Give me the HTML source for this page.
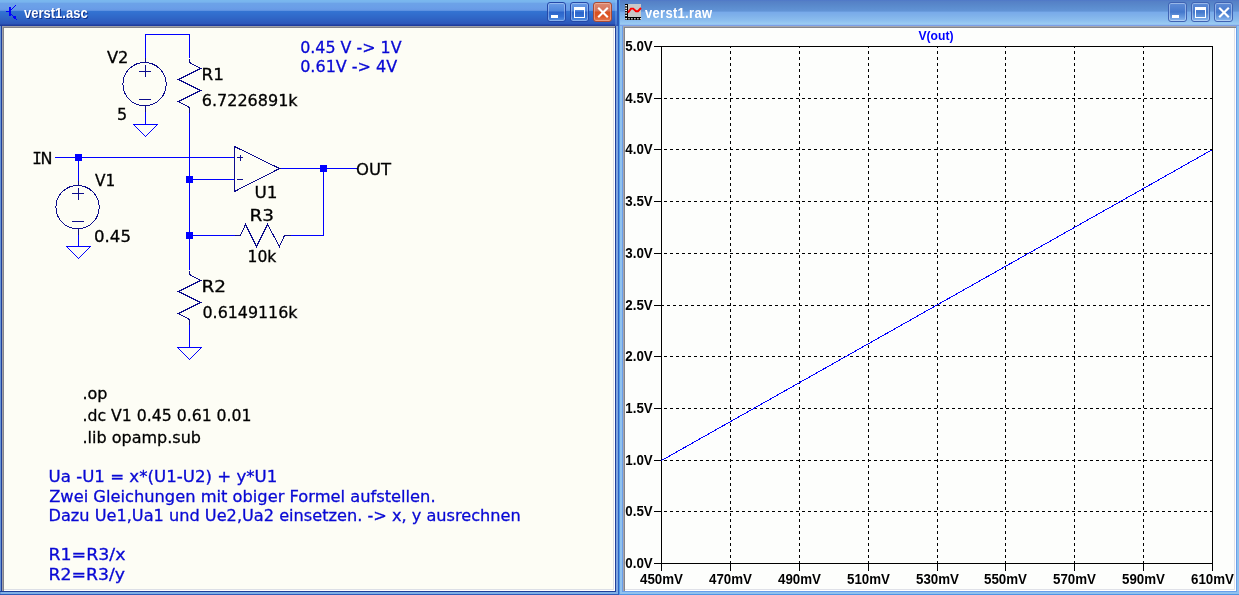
<!DOCTYPE html>
<html><head><meta charset="utf-8"><title>verst1</title>
<style>
html,body{margin:0;padding:0;}
body{width:1239px;height:595px;overflow:hidden;position:relative;background:#2a5ac6;font-family:"Liberation Sans",sans-serif;}
.win{position:absolute;top:0;height:595px;overflow:hidden;}
#wl{left:0;width:619px;background:#2554c0;}
#wr{left:619px;width:620px;background:#6f9fe6;}
.tb{position:absolute;left:0;right:0;top:0;height:26px;}
#wl .tb{background:linear-gradient(to bottom,#7ab8ee 0px,#78b4ee 2px,#6ca2e8 3.5px,#6a9ee8 8px,#6698e4 10.4px,#3474d2 11px,#3270d0 13px,#3068c8 17px,#2e5ec0 21px,#2c55b8 24.4px,#1f3c9c 24.6px,#1f3c9c 26px);}
#wr .tb{background:linear-gradient(to bottom,#4f78c8 0px,#5580c6 1.5px,#5a8acc 6px,#6294d6 11.2px,#78aaea 12px,#80b2ea 16px,#8abcee 20px,#9ccdf2 24.4px,#7c9fe6 24.8px,#7c9fe6 26px);}
.title{will-change:transform;transform:scaleY(1.09);transform-origin:0 0;position:absolute;top:3.6px;font-weight:bold;font-size:13px;color:#fff;line-height:18px;white-space:nowrap;}
#wl .title{text-shadow:1px 1px 0 #10318c;}
.btn{position:absolute;top:2.4px;width:19.7px;height:20px;border:1px solid #2448a8;border-radius:3px;box-sizing:border-box;}
.client{position:absolute;}
svg{position:absolute;left:0;top:0;}
#ov{will-change:transform;}
svg text{font-family:"DejaVu Sans","Liberation Sans",sans-serif;white-space:pre;}
</style></head><body>

<div class="win" id="wl">
<div class="tb"></div>
<div style="position:absolute;left:0;top:26px;width:1px;height:569px;background:#6a96d8"></div>
<div style="position:absolute;left:1px;top:26px;width:1px;height:569px;background:#1f3f9a"></div>
<div style="position:absolute;left:615px;top:26px;width:1px;height:569px;background:#1f3f9a"></div>
<div style="position:absolute;left:616px;top:26px;width:2px;height:569px;background:#7fa6e0"></div>
<div style="position:absolute;left:618px;top:26px;width:1px;height:569px;background:#2f62c4"></div>
<div style="position:absolute;left:615px;top:0;width:2px;height:26px;background:rgba(150,200,255,.28)"></div>
<div style="position:absolute;left:617px;top:0;width:2px;height:26px;background:#2a56b8"></div>
<div style="position:absolute;left:0;top:591px;width:616px;height:1px;background:#1f3f9a"></div>
<div style="position:absolute;left:1px;top:592px;width:617px;height:2px;background:#7fb0e6"></div>
<div style="position:absolute;left:0;top:594px;width:619px;height:1px;background:#2f5cba"></div>
<div style="position:absolute;left:2px;top:26px;width:613px;height:565px;background:#a0a0a8"></div>
<div style="position:absolute;left:3px;top:27px;width:612px;height:564px;background:#84848a"></div>
<div style="position:absolute;left:4px;top:28px;width:611px;height:563px;background:#ffffff"></div>
<div style="position:absolute;left:4px;top:28px;width:610px;height:562px;background:#dcdfe6"></div>
<div class="client" style="left:4px;top:28px;width:609px;height:561px;background:#fdfdf5"></div>
<svg width="24" height="26" viewBox="0 0 24 26" shape-rendering="crispEdges"><g fill="#0000ff"><rect x="6" y="11" width="3" height="1"/><rect x="9" y="7" width="2" height="9"/><rect x="11" y="9" width="1" height="1"/><rect x="12" y="8" width="1" height="1"/><rect x="13" y="7" width="1" height="1"/><rect x="14" y="6" width="1" height="1"/><rect x="15" y="5" width="1" height="1"/><rect x="11" y="14" width="1" height="1"/><rect x="12" y="15" width="1" height="1"/><rect x="13" y="16" width="1" height="1"/><rect x="14" y="17" width="1" height="1"/><rect x="15" y="18" width="1" height="1"/><rect x="16" y="19" width="1" height="1"/><rect x="13" y="17" width="3" height="1"/><rect x="14" y="16" width="1" height="3"/><rect x="15" y="16" width="1" height="2"/></g></svg>
<div class="title" style="left:24px">verst1.asc</div>
<div class="btn" style="left:546.8px;background:linear-gradient(to bottom,#6a9ce6 0%,#4f86dc 44%,#2c64ca 50%,#3470d2 75%,#5590e2 100%);border-color:#2448a8;box-shadow:inset 0 0 0 1px rgba(220,235,255,.38)"><div style="position:absolute;left:3px;top:12px;width:7px;height:3px;background:#fff"></div></div>
<div class="btn" style="left:569.7px;background:linear-gradient(to bottom,#6a9ce6 0%,#4f86dc 44%,#2c64ca 50%,#3470d2 75%,#5590e2 100%);border-color:#2448a8;box-shadow:inset 0 0 0 1px rgba(220,235,255,.38)"><div style="position:absolute;left:3px;top:4px;width:9px;height:7px;border:1px solid #fff;border-top-width:3px;box-sizing:content-box;"></div></div>
<div class="btn" style="left:592.6px;background:linear-gradient(to bottom,#dc8a72 0%,#d6735a 44%,#d9501f 50%,#dd5526 75%,#e27a52 100%);border-color:#a84a34;box-shadow:inset 0 0 0 1px rgba(255,220,205,.4)"><svg width="18" height="18" viewBox="0 0 18 18"><path d="M4.2 4.7 L13.8 14.3 M13.8 4.7 L4.2 14.3" stroke="#fff" stroke-width="2.1" fill="none"/></svg></div>
</div>
<div class="win" id="wr">
<div class="tb"></div>
<div style="position:absolute;left:0;top:26px;width:620px;height:569px;background:#90c2ee"></div>
<div style="position:absolute;left:0;top:0;width:1px;height:595px;background:#4f9de6"></div>
<div style="position:absolute;left:3px;top:26px;width:1px;height:566px;background:#6a9eea"></div>
<div style="position:absolute;left:617px;top:26px;width:1px;height:566px;background:#6a9eea"></div>
<div style="position:absolute;left:3px;top:591px;width:615px;height:1px;background:#6a9eea"></div>
<div style="position:absolute;left:0;top:594px;width:620px;height:1px;background:#4f95e4"></div>
<div style="position:absolute;left:4px;top:26px;width:613px;height:565px;background:#a6a6ae"></div>
<div style="position:absolute;left:5px;top:27px;width:612px;height:564px;background:#84848a"></div>
<div style="position:absolute;left:6px;top:28px;width:611px;height:563px;background:#ffffff"></div>
<div style="position:absolute;left:6px;top:28px;width:610px;height:562px;background:#dfe1e8"></div>
<div class="client" style="left:6px;top:28px;width:609px;height:561px;background:#fdfefc"></div>
<svg width="30" height="26" viewBox="0 0 30 26"><rect x="6" y="4" width="16" height="16" fill="#000"/><rect x="9" y="4" width="13" height="13" fill="#c8c8c8"/><rect x="6.2" y="5.0" width="1.8" height="1.3" fill="#fff"/><rect x="6.2" y="7.55" width="1.8" height="1.3" fill="#fff"/><rect x="6.2" y="9.8" width="1.8" height="1.3" fill="#fff"/><rect x="6.2" y="12.3" width="1.8" height="1.3" fill="#fff"/><rect x="6.2" y="14.9" width="1.8" height="1.3" fill="#fff"/><rect x="6.2" y="18.1" width="1.8" height="1.3" fill="#fff"/><rect x="9.3" y="18.1" width="1.4" height="1.3" fill="#fff"/><rect x="12.2" y="18.1" width="1.4" height="1.3" fill="#fff"/><rect x="15.2" y="18.1" width="1.4" height="1.3" fill="#fff"/><rect x="18.2" y="18.1" width="1.4" height="1.3" fill="#fff"/><rect x="20.9" y="18.1" width="1.4" height="1.3" fill="#fff"/><polyline points="9,12.6 12,8.6 14.2,8.6 17,11.2 19,11.2 22,8" stroke="#ff0000" stroke-width="1.9" fill="none"/></svg>
<div class="title" style="left:26px;letter-spacing:0.3px">verst1.raw</div>
<div class="btn" style="left:548.5999999999999px;background:linear-gradient(to bottom,#5f8cd6 0%,#4a7ccf 40%,#4478cc 50%,#6a9ce0 80%,#8cb8ee 100%);border-color:#3f63b4;box-shadow:inset 0 0 0 1px rgba(225,238,255,.45)"><div style="position:absolute;left:3px;top:12px;width:7px;height:3px;background:#fff"></div></div>
<div class="btn" style="left:571.5999999999999px;background:linear-gradient(to bottom,#5f8cd6 0%,#4a7ccf 40%,#4478cc 50%,#6a9ce0 80%,#8cb8ee 100%);border-color:#3f63b4;box-shadow:inset 0 0 0 1px rgba(225,238,255,.45)"><div style="position:absolute;left:3px;top:4px;width:9px;height:7px;border:1px solid #fff;border-top-width:3px;box-sizing:content-box;"></div></div>
<div class="btn" style="left:594.5999999999999px;background:linear-gradient(to bottom,#5f8cd6 0%,#4a7ccf 40%,#4478cc 50%,#6a9ce0 80%,#8cb8ee 100%);border-color:#3f63b4;box-shadow:inset 0 0 0 1px rgba(225,238,255,.45)"><svg width="18" height="18" viewBox="0 0 18 18"><path d="M4.2 4.7 L13.8 14.3 M13.8 4.7 L4.2 14.3" stroke="#fff" stroke-width="2.1" fill="none"/></svg></div>
</div>
<svg id="ov" width="1239" height="595" viewBox="0 0 1239 595" shape-rendering="crispEdges" stroke-width="1">
<polyline points="145.5,57.5 145.5,34.5 189.5,34.5 189.5,57.5" stroke="#0000ff" fill="none"/>
<rect x="189" y="112" width="1" height="158" fill="#0000ff"/>
<rect x="55" y="157" width="180" height="1" fill="#0000ff"/>
<rect x="189" y="179" width="46" height="1" fill="#0000ff"/>
<rect x="189" y="235" width="46" height="1" fill="#0000ff"/>
<rect x="290" y="235" width="34" height="1" fill="#0000ff"/>
<rect x="323" y="168" width="1" height="68" fill="#0000ff"/>
<rect x="279" y="168" width="79" height="1" fill="#0000ff"/>
<rect x="78" y="157" width="1" height="24" fill="#0000ff"/>
<rect x="78" y="235" width="1" height="12" fill="#0000ff"/>
<rect x="145" y="112" width="1" height="13" fill="#0000ff"/>
<rect x="189" y="324" width="1" height="24" fill="#0000ff"/>
<circle cx="144.55" cy="84.15" r="21.65" stroke="#0c0c8c" fill="none"/>
<rect x="139" y="71" width="12" height="1" fill="#0c0c8c"/>
<rect x="145" y="65" width="1" height="12" fill="#0c0c8c"/>
<rect x="139" y="99" width="12" height="1" fill="#0c0c8c"/>
<rect x="145" y="58" width="1" height="5" fill="#0c0c8c"/>
<rect x="145" y="105" width="1" height="7" fill="#0c0c8c"/>
<polygon points="133.5,124.5 157.5,124.5 145.5,136.5" stroke="#0000ff" fill="none"/>
<circle cx="77.55" cy="207.15" r="21.65" stroke="#0c0c8c" fill="none"/>
<rect x="72" y="193" width="12" height="1" fill="#0c0c8c"/>
<rect x="78" y="188" width="1" height="12" fill="#0c0c8c"/>
<rect x="72" y="221" width="12" height="1" fill="#0c0c8c"/>
<rect x="78" y="181" width="1" height="5" fill="#0c0c8c"/>
<rect x="78" y="228" width="1" height="7" fill="#0c0c8c"/>
<polygon points="66.5,246.5 90.5,246.5 78.5,258.5" stroke="#0000ff" fill="none"/>
<polyline points="189.5,58.5 189.5,62.5 200.5,68.5 178.5,79.5 200.5,90.5 178.5,101.5 189.5,107.5 189.5,112.5" stroke="#0c0c8c" fill="none"/>
<polyline points="189.5,270.5 189.5,274.5 200.5,280.5 178.5,291.5 200.5,302.5 178.5,313.5 189.5,319.5 189.5,324.5" stroke="#0c0c8c" fill="none"/>
<polygon points="177.5,347.5 201.5,347.5 189.5,359.5" stroke="#0000ff" fill="none"/>
<polyline points="234.5,235.5 240.5,235.5 245.5,224.5 256.5,246.5 267.5,224.5 279.5,246.5 284.5,235.5 290.5,235.5" stroke="#0c0c8c" fill="none"/>
<polygon points="234.5,146.5 279.5,168.5 234.5,191.5" stroke="#0c0c8c" fill="none"/>
<rect x="237" y="157" width="6" height="1" fill="#0c0c8c"/>
<rect x="240" y="155" width="1" height="6" fill="#0c0c8c"/>
<rect x="237" y="179" width="6" height="1" fill="#0c0c8c"/>
<rect x="75" y="154" width="7" height="7" fill="#0000ff"/>
<rect x="186" y="176" width="7" height="7" fill="#0000ff"/>
<rect x="186" y="232" width="7" height="7" fill="#0000ff"/>
<rect x="320" y="165" width="7" height="7" fill="#0000ff"/>
<text x="106.9" y="63" fill="#000000" font-size="16" textLength="21.5" lengthAdjust="spacingAndGlyphs" stroke="#000000" stroke-width="0.3">V2</text>
<text x="117" y="119.5" fill="#000000" font-size="16" textLength="10.19" lengthAdjust="spacingAndGlyphs" stroke="#000000" stroke-width="0.3">5</text>
<text x="201.5" y="80" fill="#000000" font-size="16" textLength="22.43" lengthAdjust="spacingAndGlyphs" stroke="#000000" stroke-width="0.3">R1</text>
<text x="201.8" y="105.5" fill="#000000" font-size="16" textLength="95.8" lengthAdjust="spacingAndGlyphs" stroke="#000000" stroke-width="0.3">6.7226891k</text>
<text y="164" fill="#000" font-size="16" stroke="#000" stroke-width="0.3"><tspan x="32.3" style="font-family:'DejaVu Sans Mono',monospace">I</tspan><tspan x="40.4">N</tspan></text>
<text x="94.9" y="185.5" fill="#000000" font-size="16" textLength="20.28" lengthAdjust="spacingAndGlyphs" stroke="#000000" stroke-width="0.3">V1</text>
<text x="94" y="241.5" fill="#000000" font-size="16" textLength="36.96" lengthAdjust="spacingAndGlyphs" stroke="#000000" stroke-width="0.3">0.45</text>
<text x="254.5" y="197.5" fill="#000000" font-size="16" textLength="23.03" lengthAdjust="spacingAndGlyphs" stroke="#000000" stroke-width="0.3">U1</text>
<text x="249.5" y="220.5" fill="#000000" font-size="16" textLength="24.53" lengthAdjust="spacingAndGlyphs" stroke="#000000" stroke-width="0.3">R3</text>
<text x="247.5" y="261.5" fill="#000000" font-size="16" textLength="28.77" lengthAdjust="spacingAndGlyphs" stroke="#000000" stroke-width="0.3">10k</text>
<text x="356" y="174.5" fill="#000000" font-size="16" textLength="35.03" lengthAdjust="spacingAndGlyphs" stroke="#000000" stroke-width="0.3">OUT</text>
<text x="201.5" y="291.5" fill="#000000" font-size="16" textLength="24.62" lengthAdjust="spacingAndGlyphs" stroke="#000000" stroke-width="0.3">R2</text>
<text x="202.5" y="317.5" fill="#000000" font-size="16" textLength="94.95" lengthAdjust="spacingAndGlyphs" stroke="#000000" stroke-width="0.3">0.6149116k</text>
<text x="300.2" y="52.8" fill="#0808d4" font-size="16" textLength="101.38" lengthAdjust="spacingAndGlyphs" stroke="#0808d4" stroke-width="0.3">0.45 V -&gt; 1V</text>
<text x="300.2" y="72" fill="#0808d4" font-size="16" textLength="97.05" lengthAdjust="spacingAndGlyphs" stroke="#0808d4" stroke-width="0.3">0.61V -&gt; 4V</text>
<text x="82.5" y="398.8" fill="#000000" font-size="16" textLength="25.03" lengthAdjust="spacingAndGlyphs" stroke="#000000" stroke-width="0.3">.op</text>
<text x="82.5" y="420.8" fill="#000000" font-size="16" textLength="169.07" lengthAdjust="spacingAndGlyphs" stroke="#000000" stroke-width="0.3">.dc V1 0.45 0.61 0.01</text>
<text x="82.5" y="442.8" fill="#000000" font-size="16" textLength="118.44" lengthAdjust="spacingAndGlyphs" stroke="#000000" stroke-width="0.3">.lib opamp.sub</text>
<text x="48.5" y="481.9" fill="#0808d4" font-size="16" textLength="228.85" lengthAdjust="spacingAndGlyphs" stroke="#0808d4" stroke-width="0.3">Ua -U1 = x*(U1-U2) + y*U1</text>
<text x="49.2" y="501.7" fill="#0808d4" font-size="16" textLength="386.4" lengthAdjust="spacingAndGlyphs" stroke="#0808d4" stroke-width="0.3">Zwei Gleichungen mit obiger Formel aufstellen.</text>
<text x="48.5" y="521" fill="#0808d4" font-size="16" textLength="472.26" lengthAdjust="spacingAndGlyphs" stroke="#0808d4" stroke-width="0.3">Dazu Ue1,Ua1 und Ue2,Ua2 einsetzen. -&gt; x, y ausrechnen</text>
<text x="48.5" y="560" fill="#0808d4" font-size="16" textLength="76.94" lengthAdjust="spacingAndGlyphs" stroke="#0808d4" stroke-width="0.3">R1=R3/x</text>
<text x="48.5" y="579.8" fill="#0808d4" font-size="16" textLength="76.46" lengthAdjust="spacingAndGlyphs" stroke="#0808d4" stroke-width="0.3">R2=R3/y</text>
<line x1="730.5" y1="47" x2="730.5" y2="563" stroke="#000" stroke-dasharray="3 3" stroke-dashoffset="2"/>
<line x1="799.5" y1="47" x2="799.5" y2="563" stroke="#000" stroke-dasharray="3 3" stroke-dashoffset="2"/>
<line x1="868.5" y1="47" x2="868.5" y2="563" stroke="#000" stroke-dasharray="3 3" stroke-dashoffset="2"/>
<line x1="937.5" y1="47" x2="937.5" y2="563" stroke="#000" stroke-dasharray="3 3" stroke-dashoffset="2"/>
<line x1="1005.5" y1="47" x2="1005.5" y2="563" stroke="#000" stroke-dasharray="3 3" stroke-dashoffset="2"/>
<line x1="1074.5" y1="47" x2="1074.5" y2="563" stroke="#000" stroke-dasharray="3 3" stroke-dashoffset="2"/>
<line x1="1143.5" y1="47" x2="1143.5" y2="563" stroke="#000" stroke-dasharray="3 3" stroke-dashoffset="2"/>
<line x1="662" y1="98.5" x2="1212" y2="98.5" stroke="#000" stroke-dasharray="3 3" stroke-dashoffset="4"/>
<line x1="662" y1="149.5" x2="1212" y2="149.5" stroke="#000" stroke-dasharray="3 3" stroke-dashoffset="4"/>
<line x1="662" y1="201.5" x2="1212" y2="201.5" stroke="#000" stroke-dasharray="3 3" stroke-dashoffset="4"/>
<line x1="662" y1="253.5" x2="1212" y2="253.5" stroke="#000" stroke-dasharray="3 3" stroke-dashoffset="4"/>
<line x1="662" y1="305.5" x2="1212" y2="305.5" stroke="#000" stroke-dasharray="3 3" stroke-dashoffset="1"/>
<line x1="662" y1="356.5" x2="1212" y2="356.5" stroke="#000" stroke-dasharray="3 3" stroke-dashoffset="4"/>
<line x1="662" y1="408.5" x2="1212" y2="408.5" stroke="#000" stroke-dasharray="3 3" stroke-dashoffset="4"/>
<line x1="662" y1="460.5" x2="1212" y2="460.5" stroke="#000" stroke-dasharray="3 3" stroke-dashoffset="4"/>
<line x1="662" y1="511.5" x2="1212" y2="511.5" stroke="#000" stroke-dasharray="3 3" stroke-dashoffset="4"/>
<rect x="661.5" y="46.5" width="551" height="517" stroke="#000" fill="none"/>
<rect x="654" y="46" width="8" height="1" fill="#000"/>
<rect x="654" y="98" width="8" height="1" fill="#000"/>
<rect x="654" y="149" width="8" height="1" fill="#000"/>
<rect x="654" y="201" width="8" height="1" fill="#000"/>
<rect x="654" y="253" width="8" height="1" fill="#000"/>
<rect x="654" y="305" width="8" height="1" fill="#000"/>
<rect x="654" y="356" width="8" height="1" fill="#000"/>
<rect x="654" y="408" width="8" height="1" fill="#000"/>
<rect x="654" y="460" width="8" height="1" fill="#000"/>
<rect x="654" y="511" width="8" height="1" fill="#000"/>
<rect x="654" y="563" width="8" height="1" fill="#000"/>
<rect x="661" y="563" width="1" height="8" fill="#000"/>
<rect x="730" y="563" width="1" height="8" fill="#000"/>
<rect x="799" y="563" width="1" height="8" fill="#000"/>
<rect x="868" y="563" width="1" height="8" fill="#000"/>
<rect x="937" y="563" width="1" height="8" fill="#000"/>
<rect x="1005" y="563" width="1" height="8" fill="#000"/>
<rect x="1074" y="563" width="1" height="8" fill="#000"/>
<rect x="1143" y="563" width="1" height="8" fill="#000"/>
<rect x="1212" y="563" width="1" height="8" fill="#000"/>
<line x1="661.5" y1="460.5" x2="1212" y2="149.8" stroke="#0000ff"/>
<text transform="translate(625.3,51.2) scale(1,1.07)" fill="#000" font-size="13.33" font-weight="bold" style='font-family:"Liberation Sans", sans-serif'>5.0V</text>
<text transform="translate(625.3,103.2) scale(1,1.07)" fill="#000" font-size="13.33" font-weight="bold" style='font-family:"Liberation Sans", sans-serif'>4.5V</text>
<text transform="translate(625.3,154.2) scale(1,1.07)" fill="#000" font-size="13.33" font-weight="bold" style='font-family:"Liberation Sans", sans-serif'>4.0V</text>
<text transform="translate(625.3,206.2) scale(1,1.07)" fill="#000" font-size="13.33" font-weight="bold" style='font-family:"Liberation Sans", sans-serif'>3.5V</text>
<text transform="translate(625.3,258.2) scale(1,1.07)" fill="#000" font-size="13.33" font-weight="bold" style='font-family:"Liberation Sans", sans-serif'>3.0V</text>
<text transform="translate(625.3,310.2) scale(1,1.07)" fill="#000" font-size="13.33" font-weight="bold" style='font-family:"Liberation Sans", sans-serif'>2.5V</text>
<text transform="translate(625.3,361.2) scale(1,1.07)" fill="#000" font-size="13.33" font-weight="bold" style='font-family:"Liberation Sans", sans-serif'>2.0V</text>
<text transform="translate(625.3,413.2) scale(1,1.07)" fill="#000" font-size="13.33" font-weight="bold" style='font-family:"Liberation Sans", sans-serif'>1.5V</text>
<text transform="translate(625.3,465.2) scale(1,1.07)" fill="#000" font-size="13.33" font-weight="bold" style='font-family:"Liberation Sans", sans-serif'>1.0V</text>
<text transform="translate(625.3,516.2) scale(1,1.07)" fill="#000" font-size="13.33" font-weight="bold" style='font-family:"Liberation Sans", sans-serif'>0.5V</text>
<text transform="translate(625.3,568.2) scale(1,1.07)" fill="#000" font-size="13.33" font-weight="bold" style='font-family:"Liberation Sans", sans-serif'>0.0V</text>
<text transform="translate(661.5,584) scale(1,1.07)" fill="#000" font-size="13.33" font-weight="bold" text-anchor="middle" style='font-family:"Liberation Sans", sans-serif'>450mV</text>
<text transform="translate(730.5,584) scale(1,1.07)" fill="#000" font-size="13.33" font-weight="bold" text-anchor="middle" style='font-family:"Liberation Sans", sans-serif'>470mV</text>
<text transform="translate(799.5,584) scale(1,1.07)" fill="#000" font-size="13.33" font-weight="bold" text-anchor="middle" style='font-family:"Liberation Sans", sans-serif'>490mV</text>
<text transform="translate(868.5,584) scale(1,1.07)" fill="#000" font-size="13.33" font-weight="bold" text-anchor="middle" style='font-family:"Liberation Sans", sans-serif'>510mV</text>
<text transform="translate(937.5,584) scale(1,1.07)" fill="#000" font-size="13.33" font-weight="bold" text-anchor="middle" style='font-family:"Liberation Sans", sans-serif'>530mV</text>
<text transform="translate(1005.5,584) scale(1,1.07)" fill="#000" font-size="13.33" font-weight="bold" text-anchor="middle" style='font-family:"Liberation Sans", sans-serif'>550mV</text>
<text transform="translate(1074.5,584) scale(1,1.07)" fill="#000" font-size="13.33" font-weight="bold" text-anchor="middle" style='font-family:"Liberation Sans", sans-serif'>570mV</text>
<text transform="translate(1143.5,584) scale(1,1.07)" fill="#000" font-size="13.33" font-weight="bold" text-anchor="middle" style='font-family:"Liberation Sans", sans-serif'>590mV</text>
<text transform="translate(1212.5,584) scale(1,1.07)" fill="#000" font-size="13.33" font-weight="bold" text-anchor="middle" style='font-family:"Liberation Sans", sans-serif'>610mV</text>
<text x="936" y="40.1" fill="#0000ff" font-size="13" textLength="35" lengthAdjust="spacingAndGlyphs" font-weight="bold" text-anchor="middle" style='font-family:"Liberation Sans", sans-serif'>V(out)</text>
</svg>
</body></html>
